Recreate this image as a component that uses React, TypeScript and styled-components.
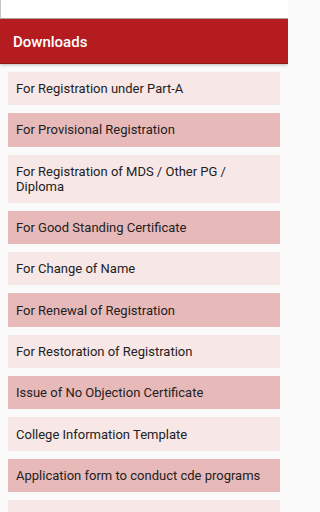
import styled, { createGlobalStyle } from "styled-components";

const items = [
  "For Registration under Part-A",
  "For Provisional Registration",
  "For Registration of MDS / Other PG / Diploma",
  "For Good Standing Certificate",
  "For Change of Name",
  "For Renewal of Registration",
  "For Restoration of Registration",
  "Issue of No Objection Certificate",
  "College Information Template",
  "Application form to conduct cde programs",
  "",
];

export default function App() {
  return (
    <>
      <GlobalStyle />
      <Page>
        <TopStrip />
        <Header>
          <HeaderTitle>Downloads</HeaderTitle>
        </Header>
        <List>
          {items.map((label, i) => (
            <Item key={i} $dark={i % 2 === 1}>
              {label}
            </Item>
          ))}
        </List>
      </Page>
    </>
  );
}

const GlobalStyle = createGlobalStyle`
  html, body {
    margin: 0;
    padding: 0;
    background: #fafafa;
    overflow: hidden;
  }
  body {
    font-family: Roboto, "Liberation Sans", sans-serif;
  }
`;

const Page = styled.div`
  width: 288px;
  height: 512px;
  display: flex;
  flex-direction: column;
  background: #fafafa;
  overflow: hidden;
`;

const TopStrip = styled.div`
  height: 18px;
  background: #ffffff;
  border-left: 1px solid #c9c4c4;
  border-bottom: 1px solid #b9a9a9;
  flex-shrink: 0;
`;

const Header = styled.div`
  height: 44px;
  background: #b41c1f;
  border-bottom: 1px solid #8f1517;
  box-shadow: 0 1px 3px rgba(0, 0, 0, 0.25);
  display: flex;
  align-items: center;
  padding-left: 13px;
  flex-shrink: 0;
`;

const HeaderTitle = styled.div`
  color: #ffffff;
  font-size: 15px;
  font-weight: 500;
  padding-top: 2px;
`;

const List = styled.div`
  display: flex;
  flex-direction: column;
  gap: 8px;
  padding: 8px 8px 0;
`;

const Item = styled.div<{ $dark: boolean }>`
  background: ${(p) => (p.$dark ? "#e8b9b9" : "#f7e7e7")};
  color: #222222;
  font-size: 13px;
  line-height: 15px;
  min-height: 33.3px;
  box-sizing: border-box;
  padding: 9.15px 14px 9.15px 8px;
  flex-shrink: 0;
`;
